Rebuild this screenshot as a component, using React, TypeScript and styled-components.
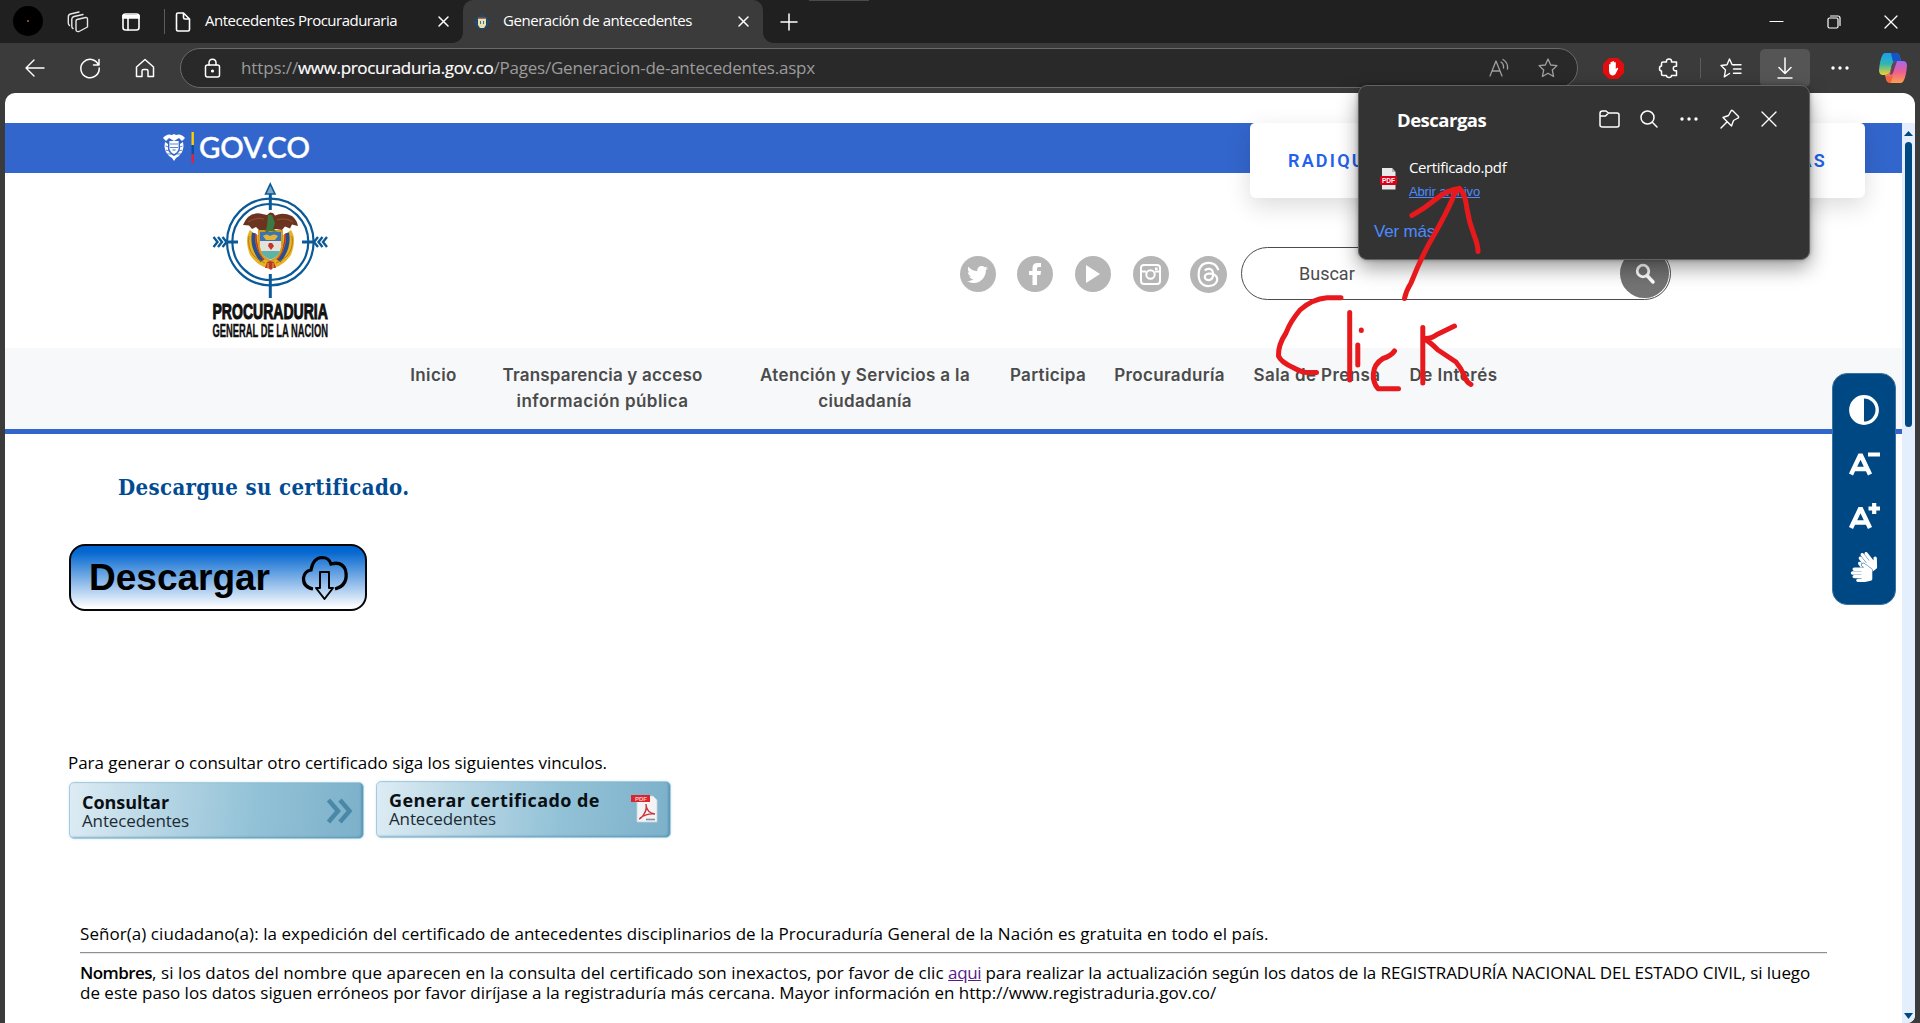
import React from "react";
import styled, { createGlobalStyle } from "styled-components";
import { FaTwitter, FaFacebookF, FaSignLanguage } from "react-icons/fa";
import { FaThreads } from "react-icons/fa6";

const ui = `"Open Sans", "Noto Sans", sans-serif`;
const arial = `"Liberation Sans", Arial, sans-serif`;

const Global = createGlobalStyle`
  * { box-sizing: border-box; }
  body { margin: 0; background: #3b3b3b; overflow: hidden; }
  svg { display: block; flex: none; overflow: visible; }
`;

const Window = styled.div`
  position: relative;
  width: 1920px;
  height: 1023px;
  display: flex;
  flex-direction: column;
  overflow: hidden;
  background: #3b3b3b;
  font-family: ${ui};
  white-space: nowrap;
`;

/* ---------- browser chrome ---------- */

const TabBar = styled.div`
  position: relative;
  display: flex;
  height: 43px;
  background: #202020;
  color: #fff;
`;

const DragHint = styled.div`
  position: absolute;
  top: 0;
  left: 809px;
  width: 60px;
  height: 1px;
  background: #4a4a4a;
`;

const Slot = styled.div<{ $w: number; $ml?: number }>`
  display: flex;
  flex: none;
  align-items: center;
  justify-content: center;
  width: ${(p) => p.$w}px;
  margin-left: ${(p) => p.$ml ?? 0}px;
`;

const Divider = styled.div<{ $ml: number; $h: number }>`
  align-self: center;
  width: 1px;
  height: ${(p) => p.$h}px;
  margin-left: ${(p) => p.$ml}px;
  background: #5c5c5c;
`;

const Avatar = styled.div`
  display: flex;
  align-items: center;
  justify-content: center;
  width: 30px;
  height: 30px;
  margin-bottom: 1px;
  border-radius: 50%;
  background: #000;
  &::after {
    content: "";
    width: 2px;
    height: 2px;
    background: #8a4a10;
  }
`;

const Tab = styled.div<{ $active?: boolean; $w: number }>`
  position: relative;
  display: flex;
  align-items: center;
  gap: 13px;
  width: ${(p) => p.$w}px;
  padding: 0 14px 0 ${(p) => (p.$active ? 11 : 9)}px;
  border-radius: 10px 10px 0 0;
  background: ${(p) => (p.$active ? "#3b3b3b" : "transparent")};
  &::before,
  &::after {
    content: "";
    display: ${(p) => (p.$active ? "block" : "none")};
    position: absolute;
    bottom: 0;
    width: 10px;
    height: 10px;
  }
  &::before {
    left: -10px;
    background: radial-gradient(circle at 0 0, transparent 9.5px, #3b3b3b 10px);
  }
  &::after {
    right: -10px;
    background: radial-gradient(circle at 100% 0, transparent 9.5px, #3b3b3b 10px);
  }
`;

const TabTitle = styled.span<{ $ls: number }>`
  flex: 1;
  margin-top: -3px;
  font-size: 15px;
  line-height: 20px;
  letter-spacing: ${(p) => p.$ls}px;
`;

const WindowControls = styled.div`
  display: flex;
  margin-left: auto;
`;

const Toolbar = styled.div`
  display: flex;
  align-items: stretch;
  height: 50px;
  padding-left: 7px;
  background: #3b3b3b;
  color: #fff;
`;

const AddressBar = styled.div`
  display: flex;
  align-items: center;
  width: 1398px;
  height: 40px;
  margin: 5px 0 0 8px;
  padding-left: 23px;
  border: 1px solid #6a6a6a;
  border-radius: 20px;
  background: #292929;
`;

const Url = styled.div`
  display: flex;
  flex: 1;
  margin-left: 20px;
  font-size: 17px;
  line-height: 24px;
  color: #9b9b9b;
`;

const UrlPart = styled.span<{ $ls: number; $strong?: boolean }>`
  letter-spacing: ${(p) => p.$ls}px;
  color: ${(p) => (p.$strong ? "#fff" : "#9b9b9b")};
  -webkit-text-stroke: ${(p) => (p.$strong ? "0.2px #fff" : "0")};
`;

const ActiveTool = styled.div`
  display: flex;
  align-items: center;
  justify-content: center;
  width: 50px;
  height: 38px;
  margin-top: 6px;
  border-radius: 5px;
  background: #555;
`;

/* ---------- page frame ---------- */

const Page = styled.div`
  display: flex;
  flex: 1;
  margin: 0 5px;
  padding-top: 30px;
  border-radius: 10px 12px 8px 0;
  background: #fff;
  overflow: hidden;
`;

const Site = styled.main`
  position: relative;
  display: flex;
  flex-direction: column;
  width: 1897px;
`;

const Scrollbar = styled.div`
  display: flex;
  flex-direction: column;
  align-items: center;
  width: 13px;
  padding: 8px 0 4px;
  background: #e5eefd;
`;

const Thumb = styled.div`
  width: 7px;
  height: 285px;
  margin: 6px 0 auto;
  border-radius: 4px;
  background: #004884;
`;

const GovBar = styled.div`
  height: 50px;
  padding: 9px 0 0 158px;
  background: #3366cc;
`;

const TopCard = styled.div`
  position: absolute;
  top: 0;
  left: 1245px;
  display: flex;
  align-items: center;
  justify-content: space-between;
  width: 615px;
  height: 75px;
  padding: 0 38px;
  border-radius: 5px 5px 6px 6px;
  background: #fff;
  box-shadow: 0 8px 24px rgba(0, 0, 0, 0.14);
  font: 600 18px/24px Roboto, sans-serif;
  letter-spacing: 2.2px;
  color: #2360eb;
`;

const Header = styled.header`
  display: flex;
  align-items: flex-start;
  height: 175px;
  padding: 8px 0 0 205px;
`;

const Socials = styled.div`
  display: grid;
  grid-template-columns: repeat(5, 57.6px);
  width: 288px;
  margin: 75px 0 0 619px;
  justify-items: center;
`;

const SocialCircle = styled.div<{ $big?: boolean }>`
  display: flex;
  align-items: center;
  justify-content: center;
  width: ${(p) => (p.$big ? 37 : 36)}px;
  height: ${(p) => (p.$big ? 37 : 36)}px;
  border-radius: 50%;
  background: #b6b6b6;
  color: #fff;
`;

const SearchBox = styled.div`
  display: flex;
  align-items: center;
  justify-content: space-between;
  width: 430px;
  height: 53px;
  margin: 66px 0 0 4px;
  padding: 0 1px 0 57px;
  border: 1px solid #4b4b4b;
  border-radius: 27px;
  font: 18px/24px Roboto, sans-serif;
  color: #4b4b4b;
`;

const SearchButton = styled.div`
  display: flex;
  align-items: center;
  justify-content: center;
  width: 49px;
  height: 49px;
  border-radius: 50%;
  background: #737373;
`;

const Nav = styled.nav`
  display: flex;
  height: 86px;
  padding: 14px 0 0 391px;
  border-bottom: 5px solid #3366cc;
  background: #f6f8fa;
`;

const NavItem = styled.a<{ $w: number; $ls?: number }>`
  width: ${(p) => p.$w}px;
  font: 600 17px/26px Inter, sans-serif;
  letter-spacing: ${(p) => p.$ls ?? 0.35}px;
  text-align: center;
  color: #4b4b4b;
`;

/* ---------- content ---------- */

const Content = styled.section`
  display: flex;
  flex-direction: column;
  align-items: flex-start;
  padding: 38px 0 0 63px;
  font-size: 17px;
  line-height: 20px;
  color: #000;
`;

const Title = styled.h1`
  margin: 0 0 0 50px;
  font: bold 22px/30px "DejaVu Serif Condensed", "DejaVu Serif", serif;
  font-stretch: condensed;
  letter-spacing: 0.36px;
  color: #004b93;
`;

const DownloadButton = styled.button`
  display: flex;
  align-items: center;
  justify-content: space-between;
  width: 298px;
  height: 67px;
  margin: 42px 0 0 1px;
  padding: 0 17px 0 18px;
  border: 2px solid #05070a;
  border-radius: 16px;
  background: linear-gradient(#0063cf 0, #0668d0 10%, #fff 98%);
  font: bold 37px/44px ${arial};
  color: #000;
`;

const Lead = styled.p`
  margin: 141px 0 0;
  line-height: 22px;
  letter-spacing: -0.034px;
`;

const LinkRow = styled.div`
  display: flex;
  gap: 12px;
  margin: 7px 0 0 1px;
`;

const ImageLink = styled.a<{ $lower?: boolean }>`
  display: flex;
  align-items: center;
  justify-content: space-between;
  width: 295px;
  height: 57px;
  margin-top: ${(p) => (p.$lower ? 1 : 0)}px;
  padding: 0 11px ${(p) => (p.$lower ? 0 : 2)}px 12px;
  border: 1px solid #a5cbdd;
  border-radius: 5px;
  background: linear-gradient(96deg, #ddecf4 0%, #b5d5e4 32%, #93c2d7 62%, #7cb1ca 100%);
  box-shadow: inset -2px -1px 2px rgba(70, 130, 165, 0.55), 0 0 3px #d7eaf4;
`;

const LinkText = styled.div`
  display: flex;
  flex-direction: column;
`;

const LinkTitle = styled.span<{ $ls: number }>`
  font-weight: bold;
  font-size: 18px;
  line-height: 20px;
  letter-spacing: ${(p) => p.$ls}px;
  color: #0a0f14;
`;

const LinkSub = styled.span`
  font-size: 17px;
  line-height: 18px;
  letter-spacing: -0.13px;
  color: #1d2a33;
`;

const Notice = styled.div`
  width: 1747px;
  margin: 85px 0 0 12px;
`;

const Rule = styled.hr`
  height: 2px;
  margin: 8px 0 9px;
  border: 0;
  border-top: 1px solid #8f8f8f;
  border-bottom: 1px solid #e6e6e6;
`;

const Line = styled.div<{ $ls?: number }>`
  line-height: 20px;
  letter-spacing: ${(p) => p.$ls ?? 0}px;
`;

const Run = styled.span<{ $ls: number }>`
  letter-spacing: ${(p) => p.$ls}px;
  white-space: pre;
`;

const Strong = styled.b`
  font-weight: 600;
  letter-spacing: -0.55px;
`;

const VisitedLink = styled.a`
  letter-spacing: -0.39px;
  color: #551a8b;
  text-decoration: underline;
`;

const AccessPanel = styled.aside`
  position: absolute;
  top: 250px;
  left: 1827px;
  display: flex;
  flex-direction: column;
  align-items: center;
  width: 64px;
  height: 232px;
  padding-top: 21px;
  border: 1px solid #3d719d;
  border-radius: 15px;
  background: #004884;
  color: #fff;
`;

const SizeIcon = styled.div<{ $mt?: number }>`
  margin-top: ${(p) => p.$mt ?? 26}px;
`;

/* ---------- downloads flyout ---------- */

const Flyout = styled.div`
  position: absolute;
  top: 85px;
  left: 1358px;
  width: 452px;
  height: 175px;
  display: flex;
  flex-direction: column;
  border: 1px solid #626262;
  border-radius: 9px;
  background: #333;
  box-shadow: 0 8px 20px rgba(0, 0, 0, 0.38), 0 0 4px rgba(0, 0, 0, 0.3);
  color: #fff;
`;

const FlyoutHead = styled.div`
  display: flex;
  align-items: center;
  height: 40px;
  margin-top: 13px;
  padding: 0 21px 0 38px;
`;

const FlyoutTitle = styled.h2`
  flex: 1;
  margin: 2px 0 0;
  font-weight: 700;
  font-size: 18.5px;
  line-height: 26px;
  letter-spacing: -0.5px;
`;

const FileRow = styled.div`
  display: flex;
  align-items: center;
  gap: 12px;
  height: 48px;
  margin-top: 16px;
  padding-left: 21px;
`;

const FileText = styled.div`
  display: flex;
  flex-direction: column;
`;

const FileName = styled.span`
  margin-top: -2px;
  font-size: 15px;
  line-height: 24px;
  letter-spacing: -0.38px;
`;

const OpenLink = styled.a`
  margin-top: 3px;
  font: 13px/20px ${arial};
  letter-spacing: -0.15px;
  text-decoration: underline;
  color: #4c8bff;
`;

const MoreLink = styled.a`
  margin: 19px 0 0 15px;
  font: 17px/20px ${arial};
  letter-spacing: -0.19px;
  color: #4c8bff;
`;

const Ink = styled.svg`
  position: absolute;
  inset: 0;
  pointer-events: none;
`;

/* ---------- drawings ---------- */

type LineIconProps = { w: number; h?: number; sw?: number; color?: string; children: React.ReactNode };
const LineIcon = ({ w, h, sw = 1.4, color = "#fff", children }: LineIconProps) => (
  <svg width={w} height={h ?? w} viewBox={`0 0 ${w} ${h ?? w}`} fill="none" stroke={color}
    strokeWidth={sw} strokeLinecap="round" strokeLinejoin="round">{children}</svg>
);

const Cross = ({ s, sw = 1.3 }: { s: number; sw?: number }) => (
  <LineIcon w={s} sw={sw}><path d={`M1 1 ${s - 1} ${s - 1}M${s - 1} 1 1 ${s - 1}`} /></LineIcon>
);

const Dots = () => (
  <svg width="18" height="4" fill="#fff"><circle cx="2" cy="2" r="1.7" /><circle cx="9" cy="2" r="1.7" /><circle cx="16" cy="2" r="1.7" /></svg>
);

const GovLogo = () => (
  <svg width="148" height="32" viewBox="0 0 148 32">
    <g fill="#fff">
      <path d="M0 6Q4 1 9 3L11 2 13 3Q18 1 22 6L19 9 16 6 11 9 6 6 3 9Z" />
      <path d="M2 10Q0 18 6 24L9 26 11 29 13 26 16 24Q22 18 20 10L17 12V17Q16 22 11 24 6 22 5 17V12Z" />
      <path d="M6 9H16V17Q15 21 11 22 7 21 6 17Z" />
    </g>
    <path d="M7 12H15M7 15.500H15M2.500 14l3 1M2.600 18l4 1M19.500 14l-3 1M19.400 18l-4 1M4 22l4 0M18 22l-4 0M6 9v8q1 4 5 6 4-2 5-6V9" fill="none" stroke="#3366cc" strokeWidth=".8" />
    <path d="M9.500 18h3" stroke="#3366cc" />
    <rect x="28.500" y="0" width="2.400" height="13" fill="#ffcd00" />
    <rect x="28.500" y="13" width="2.400" height="9" fill="#06529e" />
    <rect x="28.500" y="22" width="2.400" height="9" fill="#e0213f" />
    <text x="36" y="25.800" fontFamily="Lato, sans-serif" fontSize="28" fontWeight="500" fill="#fff" stroke="#fff" strokeWidth=".45" textLength="111" lengthAdjust="spacingAndGlyphs">GOV.CO</text>
  </svg>
);

const EntityLogo = () => (
  <svg width="120" height="160" viewBox="0 0 120 160">
    <g fill="none" stroke="#0b5a97">
      <circle cx="60.300" cy="61" r="43.300" strokeWidth="2.200" />
      <circle cx="60.300" cy="61" r="38" strokeWidth="2.200" />
      <path d="M60.300 10V29M60.300 93V117M17 61H28M92 61H105" strokeWidth="3" />
      <path d="M3.500 56 7.500 61 3.500 66M8 56l4 5-4 5M12.500 56l4 5-4 5M117 56l-4 5 4 5M112.500 56l-4 5 4 5M108 56l-4 5 4 5" strokeWidth="2.400" />
    </g>
    <path d="M60.300 3 65 13H55.600Z" fill="#7fa9c8" stroke="#0b5a97" strokeWidth="1.600" />
    <path d="M40 49Q34 58 40 74 47 84 57 87L64 87Q74 84 81 74 87 58 81 49L74 54H46Z" fill="#e8b322" />
    <path d="M44 52Q41 66 52 80M77 52Q80 66 69 80" fill="none" stroke="#29508e" strokeWidth="4" />
    <path d="M39 55Q37 67 44 75 49 80 55 82M82 55Q84 67 77 75 72 80 66 82" fill="none" stroke="#b9761a" strokeWidth="1" />
    <path d="M46 53Q45 66 54 79M75 53Q76 66 67 79" fill="none" stroke="#c33c22" strokeWidth="1.600" />
    <path d="M49 50H72V66Q70 77 60.500 80 51 77 49 66Z" fill="#e4e1da" stroke="#d39a1c" strokeWidth="1.800" />
    <path d="M50 51H71V60H50Z" fill="#3c73b4" />
    <path d="M53 55q3.500-3 7 0 4-3 8 0l-3 4h-9Z" fill="#e0b53a" />
    <path d="M59 62h3l2 3-3 4-3-4Z" fill="#c2352a" />
    <path d="M51 70H70Q68 76 60.500 78.500 53 76 51 70Z" fill="#5fb3a6" />
    <path d="M33 44Q38 31 50 32.500L57 34 60 31.500 63 32 65 34.500Q73 31 82 35 87 39 88 45L82 43.500 80 47.500 75 45.500 72 49 66 48 60.500 50 54 49 49 49 46 46 42 48 39 44.500Z" fill="#6b3420" />
    <path d="M38 41q8-5 16-3M83 41q-8-5-16-2" fill="none" stroke="#8d4c30" strokeWidth="1.200" />
    <path d="M58 34h4l3 8-2 6 4 3-7-1-5 2 2-7Z" fill="#3b7a43" />
    <path d="M57 81l3-1 4 1 2 6-3 0-2 2-3-2-3 0Z" fill="#b9382a" />
    <path d="M58 82v6M63 82v5" stroke="#e8b322" />
    <g fontFamily={arial} fontWeight="bold" fill="#111" stroke="#111">
      <text transform="translate(2.500 138) scale(.62 1)" fontSize="22.500" strokeWidth="1.100" textLength="186" lengthAdjust="spacingAndGlyphs">PROCURADURIA</text>
      <text transform="translate(2.500 155.500) scale(.55 1)" fontSize="17.500" strokeWidth=".4" textLength="210" lengthAdjust="spacingAndGlyphs">GENERAL DE LA NACION</text>
    </g>
  </svg>
);

const PdfIcon = () => (
  <svg width="17" height="22" viewBox="0 0 17 22">
    <path d="M2 0H12L15.500 4V21.500H2Z" fill="#e9e9e9" /><path d="M12 0V4H15.500Z" fill="#b5b5b5" />
    <rect x="0" y="8" width="17" height="9" rx="1" fill="#d9001b" />
    <text x="2" y="15" fontFamily={arial} fontWeight="bold" fontSize="6.500" fill="#fff" textLength="13">PDF</text>
  </svg>
);

const AcrobatIcon = () => (
  <svg width="28" height="29" viewBox="0 0 28 29">
    <path d="M6 2H22L26 6V28H6Z" fill="#f3f3f5" stroke="#c9d3da" strokeWidth=".8" />
    <path d="M0 1H19V8H0Z" fill="#d9252b" />
    <text x="4" y="7" fontFamily={arial} fontWeight="bold" fontSize="6" fill="#f7c9c9">PDF</text>
    <path d="M15 10Q16 16 13 20 10 25 8 25M15 11Q16 19 24 20 16 19 9 24" fill="none" stroke="#c9333a" strokeWidth="1.400" />
    <path d="M15 25.500h9" stroke="#8a8f95" strokeWidth="1.600" />
  </svg>
);

const Copilot = () => (
  <svg width="28" height="32" viewBox="0 0 28 32">
    <defs>
      <linearGradient id="ca" x1="0" y1="0" x2="0" y2="1"><stop offset="0" stopColor="#1a9ff0" /><stop offset=".5" stopColor="#31b6b0" /><stop offset="1" stopColor="#f3d22c" /></linearGradient>
      <linearGradient id="cb" x1="0" y1="0" x2="0" y2="1"><stop offset="0" stopColor="#a766f0" /><stop offset=".5" stopColor="#ee5f93" /><stop offset="1" stopColor="#fda04a" /></linearGradient>
    </defs>
    <path d="M6 1H16Q20 1 21 5L22 9H17Q14 9 13 13L11 20Q10 23 6 23H4Q0 23 0 18 1 8 3 4 4 1 6 1Z" fill="url(#ca)" />
    <path d="M12 1h4q4 0 5 4l1 4h-5q-2 0-3 1Z" fill="#1553c9" />
    <path d="M22 31H12Q8 31 7 27L6 23Q10 23 11 20L14 12Q15 9 18 9H24Q28 9 28 14 27 24 25 28 24 31 22 31Z" fill="url(#cb)" />
    <path d="M7 24h4q2 0 3-2l-2 9q-4 0-5-4Z" fill="#f4643c" />
    <path d="M13 13l1-1q1-3 4-3l-4 12q-1 2-3 2Z" fill="#3b3b3b" opacity=".75" />
  </svg>
);

const App = () => (
  <Window>
    <Global />
    <TabBar>
      <DragHint />
      <Slot $w={56}><Avatar /></Slot>
      <Slot $w={43}>
        <LineIcon w={22} sw={1.4} color="#e6e6e6">
          <path d="M10 8.500 18.500 6.500Q20.500 6.200 20.500 8V16L12 20.500Q9 21 9 18.500V10Q9 8.800 10 8.500Z" />
          <path d="M6 17.500Q4.800 17 4.800 15.500V8Q5 6 7 5.500L16 3.500M2.500 14.500Q1.300 13.500 1.300 12V6Q1.300 3.500 3.500 3L12 1" />
        </LineIcon>
      </Slot>
      <Slot $w={63}>
        <LineIcon w={18} sw={1.6}>
          <rect x="1" y="1" width="16" height="16" rx="2.500" /><path d="M1 2.500H17V5H1Z" fill="#fff" /><path d="M6 5V17" />
        </LineIcon>
      </Slot>
      <Divider $ml={2} $h={25} />
      <Tab $w={298}>
        <LineIcon w={18} h={20} sw={1.6}><path d="M4 1H9.500L15.500 7V17.500Q15.500 19 14 19H4Q2.500 19 2.500 17.500V2.500Q2.500 1 4 1ZM9.500 1V5.500Q9.500 7 11 7H15.500" /></LineIcon>
        <TabTitle $ls={-0.51}>Antecedentes Procuraduraria</TabTitle>
        <Cross s={11} sw={1.5} />
      </Tab>
      <Tab $w={300} $active>
        <svg width="16" height="18" viewBox="0 0 16 18">
          <circle cx="8" cy="9" r="5.800" fill="none" stroke="#12507f" strokeWidth="1.600" /><path d="M8 1v3M8 14v3M0 9h3M13 9h3" stroke="#12507f" strokeWidth="1.500" />
          <path d="M4 5h8v7l-2 3h-4l-2-3Z" fill="#eadfae" /><path d="M4 5h8" stroke="#8d4a30" strokeWidth="1.500" /><path d="M6.500 8v3M9.500 8v3" stroke="#3a70a8" />
        </svg>
        <TabTitle $ls={-0.45}>Generación de antecedentes</TabTitle>
        <Cross s={11} sw={1.5} />
      </Tab>
      <Slot $w={52}><LineIcon w={18} sw={1.5}><path d="M9 1V17M1 9H17" /></LineIcon></Slot>
      <WindowControls>
        <Slot $w={57}><LineIcon w={13} sw={1.2}><path d="M0 6.500H13" /></LineIcon></Slot>
        <Slot $w={57}><LineIcon w={14} sw={1.2}><rect x="1" y="3" width="10" height="10" rx="1.500" /><path d="M3.500 1H11Q13 1 13 3V10.500" /></LineIcon></Slot>
        <Slot $w={58}><Cross s={14} sw={1.3} /></Slot>
      </WindowControls>
    </TabBar>

    <Toolbar>
      <Slot $w={55}><LineIcon w={20} sw={1.4}><path d="M19 10H1M9 2 1 10 9 18" /></LineIcon></Slot>
      <Slot $w={55}><LineIcon w={20} sw={1.5}><path d="M18.500 7A9.200 9.200 0 1 0 19.200 10M19 1.500V7H13.500" /></LineIcon></Slot>
      <Slot $w={55}><LineIcon w={20} sw={1.5}><path d="M1.500 9 10 1.500 18.500 9V18.500H13V13Q13 11.500 11.500 11.500H8.500Q7 11.500 7 13V18.500H1.500Z" /></LineIcon></Slot>
      <AddressBar>
        <LineIcon w={17} h={20} sw={1.5}><rect x="1.500" y="7" width="14" height="12" rx="2" /><path d="M5 7V5Q5 1.200 8.500 1.200T12 5V7" /><circle cx="8.500" cy="13" r=".8" fill="#fff" /></LineIcon>
        <Url>
          <UrlPart $ls={-0.12}>https://</UrlPart>
          <UrlPart $ls={-0.34} $strong>www.procuraduria.gov.co</UrlPart>
          <UrlPart $ls={-0.22}>/Pages/Generacion-de-antecedentes.aspx</UrlPart>
        </Url>
        <Slot $w={49}><LineIcon w={20} sw={1.3} color="#a0a0a0"><path d="M1 18 7 3 13 18M3 13H11M12 4Q15 6 14.500 10M14 1.500Q19.500 5 18.500 11" /></LineIcon></Slot>
        <Slot $w={49}><LineIcon w={20} sw={1.3} color="#a0a0a0"><path d="M10 1 12.700 7 19 7.600 14.300 12 15.600 18.500 10 15.200 4.400 18.500 5.700 12 1 7.600 7.300 7Z" /></LineIcon></Slot>
        <Slot $w={5} />
      </AddressBar>
      <Slot $w={53} $ml={9}>
        <svg width="21" height="21" viewBox="0 0 21 21">
          <path d="M6 0H15L21 6V15L15 21H6L0 15V6Z" fill="#e40d0d" />
          <path d="M6 10V6.500Q7.200 5.500 7.500 6.500V4.300Q8.700 3.200 9.200 4.300V3.500Q10.400 2.400 11 3.500V4.500Q12.300 3.500 12.800 4.800V11L14.200 9.800Q15.500 9.600 15 11L12.500 16Q11 18 8.500 17.200 6 16 6 13Z" fill="#fff" />
        </svg>
      </Slot>
      <Slot $w={58}><LineIcon w={20} sw={1.5}><path d="M4 4H7.500Q7 1 10 1T12.500 4H17.500V8.200Q14.300 7.800 14.300 10.500T17.500 12.800V17.500H12.500Q12.500 19.500 10 19.500T7.500 17.500H4Q2.500 17.500 2.500 16V13Q.5 13 .5 10.500T2.500 8V5.500Q2.500 4 4 4Z" /></LineIcon></Slot>
      <Divider $ml={2} $h={20} />
      <Slot $w={59}><LineIcon w={22} h={20} sw={1.4}><path d="M14 7 12 6.500 9.500 1 7 6.800 1 7.500 5.500 12 4.300 18.800 9.500 15.500M13.500 6.700H21M13.500 11H21M13.500 15.300H21" /></LineIcon></Slot>
      <ActiveTool><LineIcon w={16} h={22} sw={1.5}><path d="M8 1V16M2 10.500 8 16.500 14 10.500M1 21H15" /></LineIcon></ActiveTool>
      <Slot $w={60}><Dots /></Slot>
      <Slot $w={46}><Copilot /></Slot>
    </Toolbar>

    <Page>
      <Site>
        <GovBar><GovLogo /></GovBar>
        <Header>
          <EntityLogo />
          <Socials>
            <SocialCircle><FaTwitter size={21} /></SocialCircle>
            <SocialCircle>
              <svg width="12" height="22" viewBox="0 0 12 22"><path d="M3.500 22V12H0V8H3.500V5Q3.500 0 8.500 0H12V4H9.500Q8 4 8 5.500V8H12L11.500 12H8V22Z" fill="#fff" /></svg>
            </SocialCircle>
            <SocialCircle><svg width="14" height="18"><path d="M0 0 14 9 0 18Z" fill="#fff" /></svg></SocialCircle>
            <SocialCircle>
              <svg width="21" height="21" viewBox="0 0 21 21" fill="none" stroke="#fff" strokeWidth="2">
                <rect x="1" y="1" width="19" height="19" rx="3" /><path d="M1 7.500H6M15 7.500H20" /><circle cx="10.500" cy="10.500" r="4.200" /><rect x="15" y="3.500" width="2.500" height="2.500" fill="#fff" stroke="none" />
              </svg>
            </SocialCircle>
            <SocialCircle $big><FaThreads size={27} /></SocialCircle>
          </Socials>
          <SearchBox>
            <span>Buscar</span>
            <SearchButton>
              <LineIcon w={20} sw={2.8}><circle cx="8" cy="7" r="5.800" /><path d="M12.500 12 18 18" strokeWidth="3.500" /></LineIcon>
            </SearchButton>
          </SearchBox>
        </Header>
        <Nav>
          <NavItem $w={75}>Inicio</NavItem>
          <NavItem $w={263} $ls={0.2}>Transparencia y acceso<br /><Run $ls={0.47}>información pública</Run></NavItem>
          <NavItem $w={262} $ls={0.36}>Atención y Servicios a la<br />ciudadanía</NavItem>
          <NavItem $w={104}>Participa</NavItem>
          <NavItem $w={139}>Procuraduría</NavItem>
          <NavItem $w={156} $ls={0.42}>Sala de Prensa</NavItem>
          <NavItem $w={117} $ls={0.46}>De Interés</NavItem>
        </Nav>

        <Content>
          <Title>Descargue su certificado.</Title>
          <DownloadButton>
            Descargar
            <svg width="46" height="44" viewBox="0 0 46 44" fill="none" stroke="#000">
              <path d="M11 33Q1 31 1.500 22 2.500 15 9 14 11 2 20 1.500 27 1.500 29 8 40 5 43.500 14 47 29 33 33" strokeWidth="3.200" />
              <path d="M18 16H27V32H31L22.500 43 14 32H18Z" strokeWidth="2" strokeLinejoin="round" />
            </svg>
          </DownloadButton>
          <Lead>Para generar o consultar otro certificado siga los siguientes vinculos.</Lead>
          <LinkRow>
            <ImageLink $lower>
              <LinkText><LinkTitle $ls={-0.06}>Consultar</LinkTitle><LinkSub>Antecedentes</LinkSub></LinkText>
              <svg width="25" height="24" fill="none" stroke="#4a88a8" strokeWidth="4.500"><path d="M1.500 1 11 12 1.500 23M13 1 22.500 12 13 23" /></svg>
            </ImageLink>
            <ImageLink>
              <LinkText><LinkTitle $ls={0.44}>Generar certificado de</LinkTitle><LinkSub>Antecedentes</LinkSub></LinkText>
              <AcrobatIcon />
            </ImageLink>
          </LinkRow>
          <Notice>
            <Line $ls={0.055}>Señor(a) ciudadano(a): la expedición del certificado de antecedentes disciplinarios de la Procuraduría General de la Nación es gratuita en todo el país.</Line>
            <Rule />
            <Line>
              <Strong>Nombres</Strong>
              <Run $ls={0.067}>, si los datos del nombre que aparecen en la consulta del certificado son inexactos, por favor de clic </Run>
              <VisitedLink>aqui</VisitedLink>
              <Run $ls={-0.083}> para realizar la actualización según los datos de la REGISTRADURÍA NACIONAL DEL ESTADO CIVIL, si luego</Run>
            </Line>
            <Line>de este paso los datos siguen erróneos por favor diríjase a la registraduría más cercana. Mayor información en http://www.registraduria.gov.co/</Line>
          </Notice>
        </Content>

        <TopCard><span>RADIQU</span><span>AS</span></TopCard>

        <AccessPanel>
          <svg width="30" height="30" viewBox="0 0 30 30"><circle cx="15" cy="15" r="13.200" fill="none" stroke="#fff" strokeWidth="3.400" /><path d="M15 1A14 14 0 0 0 15 29Z" fill="#fff" /></svg>
          <SizeIcon><svg width="31" height="26" viewBox="0 0 31 26"><path d="M2 23.500 11.500 3.500 21 23.500M6 18H17" fill="none" stroke="#fff" strokeWidth="4.500" strokeLinejoin="bevel" /><path d="M19 3.500H31" stroke="#fff" strokeWidth="4" /></svg></SizeIcon>
          <SizeIcon><svg width="31" height="26" viewBox="0 0 31 26"><path d="M2 25 11.500 5 21 25M6 19.500H17" fill="none" stroke="#fff" strokeWidth="4.500" strokeLinejoin="bevel" /><path d="M19.500 5.500H31M25.200 0V11" stroke="#fff" strokeWidth="4.200" /></svg></SizeIcon>
          <SizeIcon $mt={23}><FaSignLanguage size={30} /></SizeIcon>
        </AccessPanel>
      </Site>
      <Scrollbar>
        <svg width="9" height="5"><path d="M0 5 4.500 0 9 5Z" fill="#004884" /></svg>
        <Thumb />
        <svg width="9" height="6"><path d="M0 0H9L4.500 6Z" fill="#004884" /></svg>
      </Scrollbar>
    </Page>

    <Flyout>
      <FlyoutHead>
        <FlyoutTitle>Descargas</FlyoutTitle>
        <Slot $w={40}><LineIcon w={21} h={18} sw={1.5}><path d="M1 3.500Q1 1 3.500 1H7L9.500 3H18Q20 3 20 5V15Q20 17 18 17H3.500Q1 17 1 15ZM1 6H6.500L9.500 3" /></LineIcon></Slot>
        <Slot $w={40}><LineIcon w={18} sw={1.5}><circle cx="7.500" cy="7.500" r="6.500" /><path d="M12.300 12.300 17 17" /></LineIcon></Slot>
        <Slot $w={40}><Dots /></Slot>
        <Slot $w={41}><LineIcon w={20} sw={1.4}><path d="M12.500 1.500 18.500 7.500Q19 8.500 18 9L13.500 11.500 11.500 17 3 8.500 8.500 6.500 11 2Q11.700 1 12.500 1.500ZM7.200 12.800 1 19" /></LineIcon></Slot>
        <Slot $w={38}><Cross s={16} sw={1.4} /></Slot>
      </FlyoutHead>
      <FileRow>
        <PdfIcon />
        <FileText><FileName>Certificado.pdf</FileName><OpenLink>Abrir archivo</OpenLink></FileText>
      </FileRow>
      <MoreLink>Ver más</MoreLink>
    </Flyout>

    <Ink width="1920" height="1023" viewBox="0 0 1920 1023" fill="none" stroke="#e8191c" strokeWidth="5" strokeLinecap="round" strokeLinejoin="round">
      <path d="M1404.500 298.500Q1406 291 1411 283 1422 255 1434 235 1446 214 1452 200 1454 193 1459.500 188.500" />
      <path d="M1411.800 215.500Q1424 209 1436 199 1447 190 1459.500 188.500 1465 193 1467 209 1469 222 1474 235 1478 245 1478 251.500" />
      <path d="M1341 297.700H1327Q1312 299 1300 310 1290 322 1286 333 1278 345 1278.500 356 1281 362 1293 367.500 1303 373 1308 372.500H1316.500" />
      <path d="M1349.700 312.500V380M1357.800 345V365M1361.300 330V330.400" />
      <path d="M1394.500 351Q1391 356 1383 358.500 1374 364 1373.300 374 1373 383 1378 388.700H1398.500" />
      <path d="M1422.800 327.500V383M1454.500 326 1437 334.500Q1431 339 1424 338.500 1430 342 1438 350L1456 362Q1461 368 1464 375 1466 382 1471 384.500" />
    </Ink>
  </Window>
);

export default App;
